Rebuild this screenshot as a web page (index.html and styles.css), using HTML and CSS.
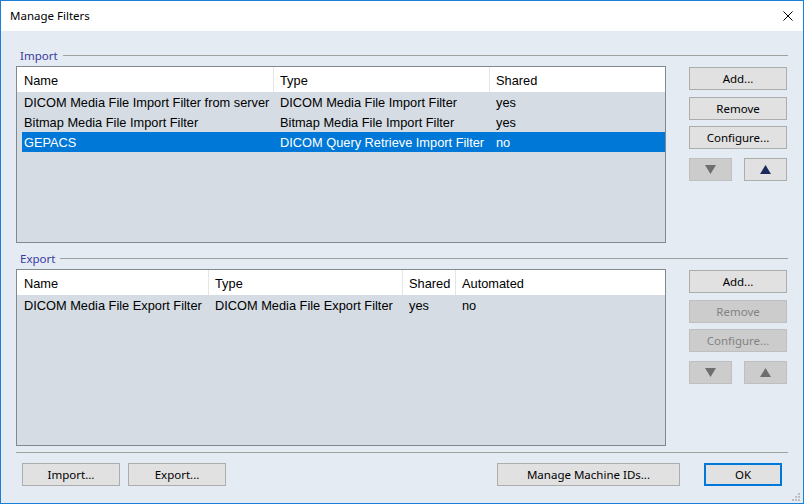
FILE: index.html
```html
<!DOCTYPE html>
<html>
<head>
<meta charset="utf-8">
<title>Manage Filters</title>
<link rel="stylesheet" href="styles.css">
</head>
<body>
<div class="window">
  <div class="titlebar">
    <span class="title">Manage Filters</span>
    <svg class="close" width="10" height="10" viewBox="0 0 10 10"><path d="M0.5 0.5 L9.5 9.5 M9.5 0.5 L0.5 9.5" stroke="#000" stroke-width="1" fill="none"/></svg>
  </div>
  <div class="content">
    <section class="group group-import">
      <div class="group-head"><span class="group-label">Import</span><span class="group-line"></span></div>
      <div class="group-body">
        <div class="list">
          <div class="list-head">
            <div class="hcell">Name</div>
            <div class="hcell">Type</div>
            <div class="hcell last">Shared</div>
          </div>
          <div class="row">
            <div class="cell">DICOM Media File Import Filter from server</div>
            <div class="cell">DICOM Media File Import Filter</div>
            <div class="cell">yes</div>
          </div>
          <div class="row">
            <div class="cell">Bitmap Media File Import Filter</div>
            <div class="cell">Bitmap Media File Import Filter</div>
            <div class="cell">yes</div>
          </div>
          <div class="row selected">
            <div class="cell">GEPACS</div>
            <div class="cell">DICOM Query Retrieve Import Filter</div>
            <div class="cell">no</div>
          </div>
        </div>
        <div class="side">
          <button class="btn">Add...</button>
          <button class="btn btn-second">Remove</button>
          <button class="btn">Configure...</button>
          <div class="arrows">
            <button class="btn arrow disabled"><svg width="11" height="9" viewBox="0 0 11 9"><path d="M0 0 H11 L5.5 9 Z" fill="#6e6e6e"/></svg></button>
            <button class="btn arrow"><svg width="11" height="9" viewBox="0 0 11 9"><path d="M0 9 H11 L5.5 0 Z" fill="#1c2b5c"/></svg></button>
          </div>
        </div>
      </div>
    </section>

    <section class="group group-export">
      <div class="group-head"><span class="group-label">Export</span><span class="group-line"></span></div>
      <div class="group-body">
        <div class="list">
          <div class="list-head">
            <div class="hcell">Name</div>
            <div class="hcell">Type</div>
            <div class="hcell">Shared</div>
            <div class="hcell last">Automated</div>
          </div>
          <div class="row">
            <div class="cell">DICOM Media File Export Filter</div>
            <div class="cell">DICOM Media File Export Filter</div>
            <div class="cell">yes</div>
            <div class="cell">no</div>
          </div>
        </div>
        <div class="side">
          <button class="btn">Add...</button>
          <button class="btn btn-second disabled">Remove</button>
          <button class="btn disabled">Configure...</button>
          <div class="arrows">
            <button class="btn arrow disabled"><svg width="11" height="9" viewBox="0 0 11 9"><path d="M0 0 H11 L5.5 9 Z" fill="#6e6e6e"/></svg></button>
            <button class="btn arrow disabled"><svg width="11" height="9" viewBox="0 0 11 9"><path d="M0 9 H11 L5.5 0 Z" fill="#6e6e6e"/></svg></button>
          </div>
        </div>
      </div>
    </section>

    <div class="separator"></div>

    <div class="footer">
      <button class="btn btn-foot">Import...</button>
      <button class="btn btn-foot">Export...</button>
      <button class="btn btn-machine">Manage Machine IDs...</button>
      <button class="btn btn-ok">OK</button>
    </div>
  </div>
  <svg class="grip" width="8" height="8" viewBox="0 0 8 8">
    <rect x="6" y="0" width="2" height="2" fill="#b9bcc0"/>
    <rect x="3" y="3" width="2" height="2" fill="#b9bcc0"/>
    <rect x="6" y="3" width="2" height="2" fill="#b9bcc0"/>
    <rect x="0" y="6" width="2" height="2" fill="#b9bcc0"/>
    <rect x="3" y="6" width="2" height="2" fill="#b9bcc0"/>
    <rect x="6" y="6" width="2" height="2" fill="#b9bcc0"/>
  </svg>
</div>
</body>
</html>
```

FILE: styles.css
```css
* { box-sizing: border-box; }

html, body {
  margin: 0;
  padding: 0;
  background: #ffffff;
}

.window {
  position: relative;
  width: 804px;
  height: 504px;
  border: 1px solid #1a7fd6;
  display: flex;
  flex-direction: column;
  font-family: "Segoe UI", "Noto Sans", sans-serif;
  font-size: 11.5px;
  color: #000;
}

.titlebar {
  height: 30px;
  flex: none;
  background: #ffffff;
  display: flex;
  align-items: center;
  justify-content: space-between;
  padding: 0 10px 0 9px;
}

.title {
  font-size: 11.5px;
  line-height: 16px;
}

.close {
  display: block;
}

.content {
  flex: 1;
  background: #e4ebf3;
  padding: 16px 15px 0 15px;
}

.group + .group {
  margin-top: 7px;
}

.group-head {
  height: 17px;
  display: flex;
  align-items: center;
}

.group-label {
  margin-left: 4px;
  padding-right: 5px;
  color: #3a3a9c;
  line-height: 16px;
}

.group-line {
  flex: 1;
  height: 1px;
  background: #a0a0a0;
}

.group-body {
  margin-top: 2px;
  display: flex;
  gap: 23px;
}

.list {
  width: 650px;
  height: 177px;
  border: 1px solid #828790;
  background: #d5dce4;
  font-family: "Liberation Sans", Arial, sans-serif;
  font-size: 12.8px;
  color: #000;
  overflow: hidden;
}

.list-head {
  display: grid;
  height: 25px;
  background: #ffffff;
}

.hcell {
  height: 25px;
  line-height: 27px;
  padding-left: 6px;
  border-right: 1px solid #e5e5e5;
  white-space: nowrap;
  overflow: hidden;
}

.hcell:first-child {
  padding-left: 7px;
}

.hcell.last {
  border-right: none;
}

.row {
  display: grid;
  height: 20px;
  margin-left: 5px;
}

.cell {
  height: 20px;
  line-height: 22px;
  padding-left: 6px;
  white-space: nowrap;
}

.cell:first-child {
  padding-left: 2px;
}

.row.selected {
  background: #0078d7;
  color: #ffffff;
}

.group-import .list-head { grid-template-columns: 257px 216px 1fr; }
.group-import .row { grid-template-columns: 252px 216px 1fr; }

.group-export .list-head { grid-template-columns: 192px 194px 53px 1fr; }
.group-export .row { grid-template-columns: 187px 194px 53px 1fr; }

.side {
  width: 98px;
  padding-top: 1px;
  display: flex;
  flex-direction: column;
  gap: 6px;
}

.btn {
  display: flex;
  align-items: center;
  justify-content: center;
  height: 23px;
  padding: 0;
  margin: 0;
  background: #e1e1e1;
  border: 1px solid #adadad;
  font-family: "Segoe UI", "Noto Sans", sans-serif;
  font-size: 11.5px;
  color: #000;
  line-height: 16px;
}

.btn.disabled {
  background: #cccccc;
  border-color: #bfbfbf;
  color: #838383;
}

.btn-second {
  margin-top: 1px;
}

.arrows {
  margin-top: 3px;
  display: flex;
  justify-content: space-between;
}

.arrow {
  width: 43px;
}

.separator {
  margin-top: 6px;
  height: 1px;
  background: #a0a0a0;
}

.footer {
  margin-top: 10px;
  display: flex;
  padding: 0 6px 0 6px;
}

.btn-foot {
  width: 98px;
}

.btn-foot + .btn-foot {
  margin-left: 8px;
}

.btn-machine {
  width: 183px;
  margin-left: auto;
}

.btn-ok {
  width: 78px;
  margin-left: 24px;
  border: 2px solid #0078d7;
}

.grip {
  position: absolute;
  right: 3px;
  bottom: 2px;
}
```
